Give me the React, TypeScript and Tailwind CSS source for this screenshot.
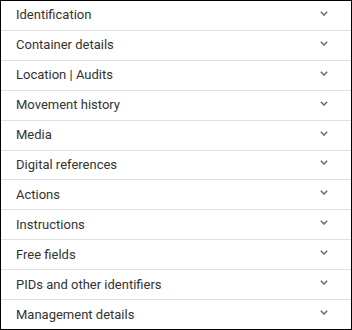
import React from 'react';

const sections: string[] = [
  'Identification',
  'Container details',
  'Location | Audits',
  'Movement history',
  'Media',
  'Digital references',
  'Actions',
  'Instructions',
  'Free fields',
  'PIDs and other identifiers',
  'Management details',
];

// small thin expand chevron, 7x4
const Chevron: React.FC = () => (
  <svg width="8" height="5" viewBox="0 0 8 5" className="text-[#6b6b6b] mb-[4px]">
    <polyline points="0.8,0.8 4,4 7.2,0.8" fill="none" stroke="currentColor" strokeWidth="1.5" />
  </svg>
);

export default function App() {
  return (
    <div
      className="w-[352px] h-[330px] bg-white border border-black flex flex-col"
      style={{ fontFamily: 'Roboto, "Liberation Sans", sans-serif' }}
    >
      {sections.map((name, i) => (
        <div
          key={name}
          className={`flex-1 flex items-center justify-between pl-[15px] pr-[23px] ${
            i < sections.length - 1 ? 'border-b border-[#e0e0e0]' : ''
          }`}
        >
          <span className="text-[13px] text-[#333333] leading-none pb-[1px]">{name}</span>
          <Chevron />
        </div>
      ))}
    </div>
  );
}
